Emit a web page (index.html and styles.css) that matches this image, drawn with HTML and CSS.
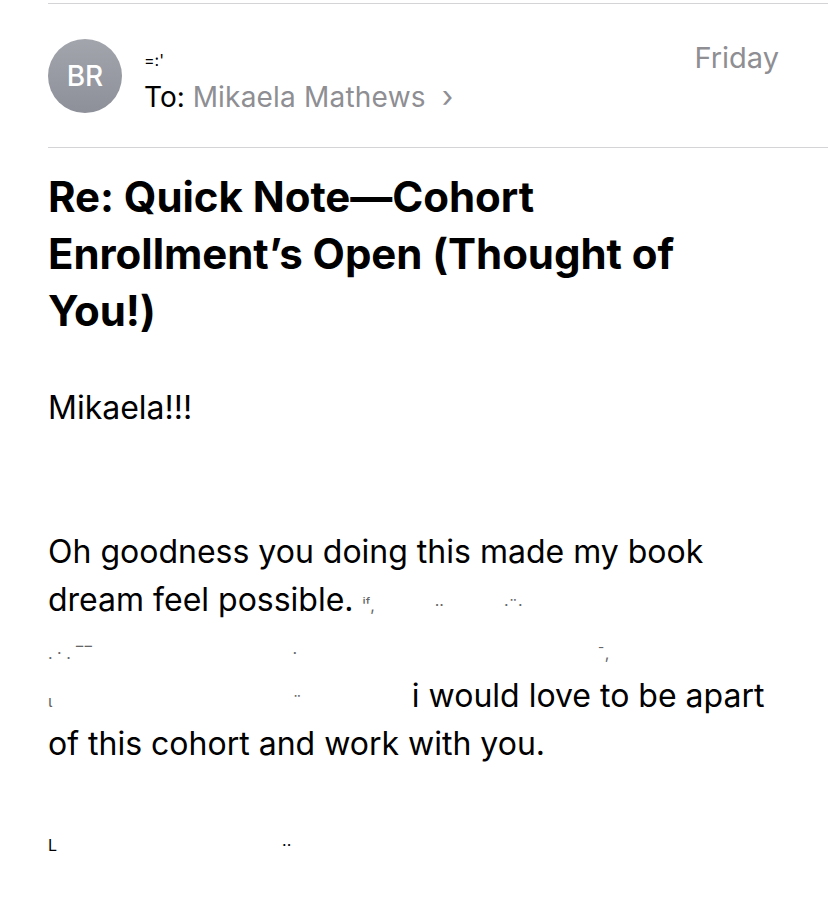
FILE: index.html
```html
<!DOCTYPE html>
<html>
<head>
<meta charset="utf-8">
<link rel="stylesheet" href="styles.css">
</head>
<body>
<div class="mail">
  <div class="header">
    <div class="avatar">BR</div>
    <div class="meta">
      <div class="from"><span class="frag dark">=:'</span></div>
      <div class="to"><span class="label">To:</span> <span class="name">Mikaela Mathews</span><span class="chev">&#x203A;</span></div>
    </div>
    <div class="date">Friday</div>
  </div>
  <h1 class="subject">Re: Quick Note—Cohort Enrollment’s Open (Thought of You!)</h1>
  <div class="body">
    <p class="line">Mikaela!!!</p>
    <p class="line blank">&nbsp;</p>
    <p class="line blank">&nbsp;</p>
    <p class="line">Oh goodness you doing this made my book</p>
    <p class="line">dream feel possible. <span class="frag">ⁱᶠ,</span><span class="gap w1"></span><span class="frag">··</span><span class="gap w2"></span><span class="frag">·¨·</span></p>
    <p class="line"><span class="frag">.  ·  .  ‾‾</span><span class="gap w3"></span><span class="frag">·</span><span class="gap w4"></span><span class="frag">¯,</span></p>
    <p class="line"><span class="frag">ι</span><span class="gap w5"></span><span class="frag">¨</span><span class="gap w6"></span>i would love to be apart</p>
    <p class="line">of this cohort and work with you.</p>
    <p class="line blank">&nbsp;</p>
    <p class="line"><span class="frag dark">L</span><span class="gap w7"></span><span class="frag dark">··</span></p>
  </div>
</div>
</body>
</html>
```
FILE: styles.css
```css
html, body {
  margin: 0;
  padding: 0;
  background: #ffffff;
}
body {
  font-family: Inter, "Noto Sans", sans-serif;
  color: #000000;
}
.mail {
  padding-left: 48px;
  padding-top: 3px;
}
.header {
  display: flex;
  align-items: flex-start;
  border-top: 1.5px solid #d4d4d6;
  border-bottom: 1.5px solid #d4d4d6;
  height: 145px;
  box-sizing: border-box;
}
.avatar {
  width: 74px;
  height: 74px;
  border-radius: 50%;
  background: linear-gradient(#a3a5ad, #8d9099);
  color: #fff;
  font-size: 28px;
  font-weight: 500;
  display: flex;
  align-items: center;
  justify-content: center;
  margin-top: 35px;
}
.meta {
  margin-left: 22px;
  margin-top: 40px;
  flex: 1;
}
.from {
  height: 36px;
  font-size: 20px;
  line-height: 30px;
}
.to {
  font-size: 28px;
  line-height: 32px;
  color: #000;
}
.to .name {
  color: #8e8e93;
  letter-spacing: 0.2px;
}
.chev {
  color: #8e8e93;
  margin-left: 16px;
  font-size: 30px;
}
.date {
  font-size: 29px;
  color: #8e8e93;
  margin-top: 36px;
  margin-right: 49px;
}
.subject {
  font-size: 42px;
  font-weight: 700;
  line-height: 57px;
  margin: 20px 0 0;
  width: 720px;
  letter-spacing: -0.05px;
}
.body {
  margin-top: 45px;
  font-size: 32px;
}
.line {
  margin: 0;
  line-height: 48px;
  white-space: nowrap;
  height: 48px;
}
.frag {
  color: #666;
  font-size: 16px;
}
.frag.dark {
  color: #000;
}
.gap { display: inline-block; }
.w1 { width: 60px; }
.w2 { width: 60px; }
.w3 { width: 200px; }
.w4 { width: 300px; }
.w5 { width: 240px; }
.w6 { width: 110px; }
.w7 { width: 225px; }
```
